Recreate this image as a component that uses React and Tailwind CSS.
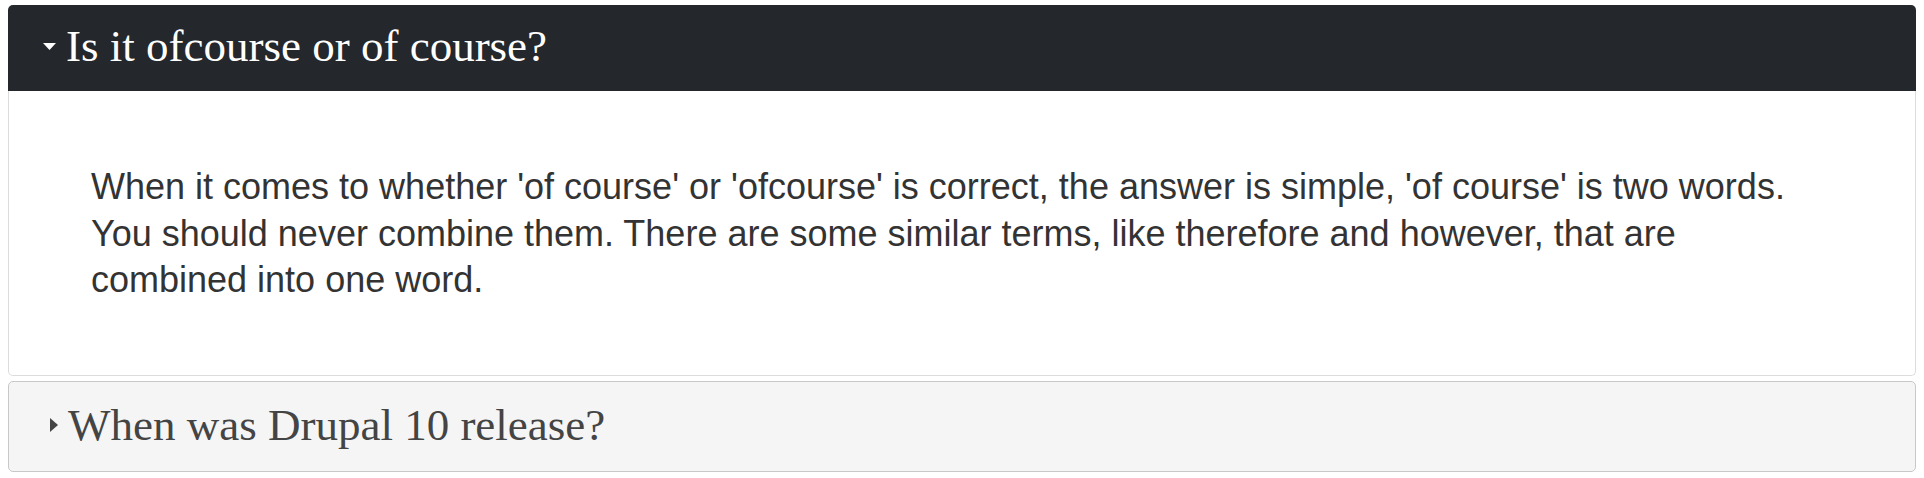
import React, { useState } from 'react';

const serif = { fontFamily: '"Liberation Serif", "Times New Roman", serif' };

const Caret = ({ open }) =>
  open ? (
    <svg width="13" height="7" viewBox="0 0 13 7" className="shrink-0">
      <path d="M0 0h13L6.5 7z" fill="currentColor" />
    </svg>
  ) : (
    <svg width="8" height="14" viewBox="0 0 8 14" className="shrink-0">
      <path d="M0 0v14l8-7z" fill="currentColor" />
    </svg>
  );

const faqs = [
  {
    q: 'Is it ofcourse or of course?',
    a: "When it comes to whether 'of course' or 'ofcourse' is correct, the answer is simple, 'of course' is two words. You should never combine them. There are some similar terms, like therefore and however, that are combined into one word.",
  },
  {
    q: 'When was Drupal 10 release?',
    a: 'Drupal 10 was released on December 14, 2022.',
  },
];

export default function App() {
  const [openIdx, setOpenIdx] = useState(0);

  return (
    <div className="bg-white px-2 pt-[5px] flex flex-col gap-[5px]">
      {faqs.map((item, i) => {
        const open = openIdx === i;
        return (
          <div key={i}>
            {open ? (
              <>
                <button
                  onClick={() => setOpenIdx(-1)}
                  className="w-full flex items-center text-left bg-[#24272b] text-white rounded-t-[5px] pl-[35px] pt-[14px] pb-[18px]"
                >
                  <span className="w-[23px] flex text-white">
                    <Caret open />
                  </span>
                  <span className="text-[45px] leading-[54px]" style={serif}>
                    {item.q}
                  </span>
                </button>
                <div
                  className="border border-t-0 border-[#dcdcdc] rounded-b-[5px] pl-[82px] pr-[82px] pt-[73px] pb-[71px] text-[#333] text-[36px] leading-[46.6px]"
                  style={{ fontFamily: '"Liberation Sans", Arial, sans-serif' }}
                >
                  <p>{item.a}</p>
                </div>
              </>
            ) : (
              <button
                onClick={() => setOpenIdx(i)}
                className="w-full flex items-center text-left bg-[#f5f5f5] text-[#444] border border-[#c8c8c8] rounded-[5px] pl-[41px] pt-[16px] pb-[19px]"
              >
                <span className="w-[18px] flex text-[#444]">
                  <Caret open={false} />
                </span>
                <span className="text-[45px] leading-[54px]" style={serif}>
                  {item.q}
                </span>
              </button>
            )}
          </div>
        );
      })}
    </div>
  );
}
